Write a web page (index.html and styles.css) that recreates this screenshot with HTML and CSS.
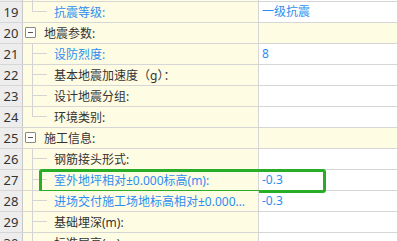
FILE: index.html
```html
<!DOCTYPE html>
<html lang="en">
<head>
    <meta charset="UTF-8">
    <meta name="viewport" content="width=device-width, initial-scale=1.0">
    <title>Parameter Tree</title>
    <link rel="stylesheet" href="styles.css">
</head>
<body>

    <div class="grid">
        <!-- tail of the row above -->
        <div class="row stub">
            <div class="num"></div>
            <div class="label child"><span class="tree"></span></div>
            <div class="value"></div>
        </div>

        <div class="row">
            <div class="num">19</div>
            <div class="label child last"><span class="tree"></span><span class="text blue">抗震等级:</span></div>
            <div class="value blue">一级抗震</div>
        </div>

        <div class="row group">
            <div class="num">20</div>
            <div class="label"><span class="toggle"></span><span class="text">地震参数:</span></div>
            <div class="value"></div>
        </div>

        <div class="row">
            <div class="num">21</div>
            <div class="label child"><span class="tree"></span><span class="text blue">设防烈度:</span></div>
            <div class="value blue">8</div>
        </div>

        <div class="row">
            <div class="num">22</div>
            <div class="label child"><span class="tree"></span><span class="text">基本地震加速度（g）：</span></div>
            <div class="value"></div>
        </div>

        <div class="row">
            <div class="num">23</div>
            <div class="label child"><span class="tree"></span><span class="text">设计地震分组:</span></div>
            <div class="value"></div>
        </div>

        <div class="row">
            <div class="num">24</div>
            <div class="label child last"><span class="tree"></span><span class="text">环境类别:</span></div>
            <div class="value"></div>
        </div>

        <div class="row group">
            <div class="num">25</div>
            <div class="label"><span class="toggle"></span><span class="text">施工信息:</span></div>
            <div class="value"></div>
        </div>

        <div class="row">
            <div class="num">26</div>
            <div class="label child"><span class="tree"></span><span class="text">钢筋接头形式:</span></div>
            <div class="value"></div>
        </div>

        <div class="row marked">
            <div class="num">27</div>
            <div class="label child"><span class="tree"></span><span class="text blue">室外地坪相对±0.000标高(m):</span></div>
            <div class="value blue">-0.3</div>
            <div class="highlight"></div>
        </div>

        <div class="row">
            <div class="num">28</div>
            <div class="label child"><span class="tree"></span><span class="text blue">进场交付施工场地标高相对±0.000标高(m):</span></div>
            <div class="value blue">-0.3</div>
        </div>

        <div class="row">
            <div class="num">29</div>
            <div class="label child"><span class="tree"></span><span class="text">基础埋深(m):</span></div>
            <div class="value"></div>
        </div>

        <div class="row">
            <div class="num">30</div>
            <div class="label child"><span class="tree"></span><span class="text">标准层高(m):</span></div>
            <div class="value"></div>
        </div>
    </div>

</body>
</html>
```

FILE: styles.css
```css
body {
    margin: 0;
    font-family: "Noto Sans", "Noto Sans CJK SC", sans-serif;
    font-size: 12px;
    color: #333;
    background: #fff;
    overflow: hidden;
}

.grid {
    width: 397px;
}

.row {
    position: relative;
    display: grid;
    grid-template-columns: 23px 236px 1fr;
    height: 20px;
    border-bottom: 1px solid #d6d6d6;
}

.row.stub {
    height: 1px;
}

.num {
    background-color: #ededed;
    border-right: 1px solid #c8c8c8;
    text-align: center;
    font-size: 13px;
    line-height: 20px;
    color: #333;
}

.label {
    position: relative;
    display: flex;
    align-items: center;
    min-width: 0;
    background-color: #fffce4;
    border-right: 1px solid #d6d6d6;
    padding-left: 21px;
    overflow: hidden;
    white-space: nowrap;
}

.label.child {
    padding-left: 31px;
}

.label .text {
    display: block;
    min-width: 0;
    max-width: 198px;
    overflow: hidden;
    text-overflow: ellipsis;
}

.value {
    padding-left: 3px;
    line-height: 20px;
    white-space: nowrap;
}

.group .value {
    background-color: #fffce4;
}

.blue {
    color: #2c8ef0;
}

/* tree connector lines */
.tree {
    position: absolute;
    left: 9px;
    top: -1px;
    bottom: -1px;
    width: 15px;
    border-left: 1px solid #d4d4d4;
}

.tree::after {
    content: "";
    position: absolute;
    left: 0;
    top: 10px;
    width: 14px;
    border-top: 1px solid #d4d4d4;
}

.last .tree {
    bottom: auto;
    height: 11px;
}

.toggle {
    position: absolute;
    left: 2px;
    top: 4px;
    width: 9px;
    height: 9px;
    border: 1px solid #8a8a8a;
    border-radius: 1px;
    background: #fff;
}

.toggle::after {
    content: "";
    position: absolute;
    left: 2px;
    top: 4px;
    width: 5px;
    border-top: 1px solid #555;
}

.highlight {
    position: absolute;
    left: 39px;
    top: -1px;
    width: 287px;
    height: 24px;
    box-sizing: border-box;
    border: 3px solid #27ad27;
    border-radius: 3px;
}
```
